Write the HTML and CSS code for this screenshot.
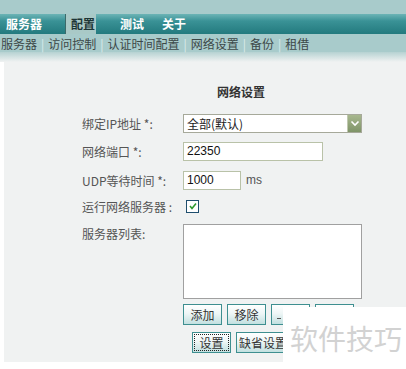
FILE: index.html
```html
<!DOCTYPE html>
<html lang="zh-CN">
<head>
  <meta charset="UTF-8">
  <title>网络设置</title>
  <link rel="stylesheet" href="styles.css">
</head>
<body>
  <div class="top-strip"></div>
  <nav class="main-nav">
    <a class="tab">服务器</a>
    <a class="tab active">配置</a>
    <a class="tab">测试</a>
    <a class="tab">关于</a>
  </nav>
  <div class="sub-nav">
    <a>服务器</a><span class="sep">|</span>
    <a>访问控制</a><span class="sep">|</span>
    <a>认证时间配置</a><span class="sep">|</span>
    <a>网络设置</a><span class="sep">|</span>
    <a>备份</a><span class="sep">|</span>
    <a>租借</a>
  </div>
  <div class="fade"></div>

  <div class="content">
    <div class="form">
      <h2 class="title">网络设置</h2>

      <div class="row row-select">
        <label>绑定IP地址 *:</label>
        <div class="select">
          <span>全部(默认)</span>
          <span class="arrow">
            <svg width="12" height="16" viewBox="0 0 12 16"><path d="M2.5 6.5 L6 10 L9.5 6.5" fill="none" stroke="#fff" stroke-width="1.6"/></svg>
          </span>
        </div>
      </div>

      <div class="row">
        <label>网络端口 *:</label>
        <div class="input port">22350</div>
      </div>

      <div class="row">
        <label>UDP等待时间 *:</label>
        <div class="input wait">1000</div>
        <span class="unit">ms</span>
      </div>

      <div class="row row-check">
        <label>运行网络服务器 :</label>
        <span class="checkbox">
          <svg width="10" height="10" viewBox="0 0 10 10"><path d="M2 5 L4 7.5 L8 2.5" fill="none" stroke="#2e9a2e" stroke-width="1.6"/></svg>
        </span>
      </div>

      <div class="row row-list">
        <label>服务器列表:</label>
        <div class="list-box">
          <div class="textarea"></div>
          <div class="buttons">
            <button class="btn">添加</button>
            <button class="btn">移除</button>
            <button class="btn"><span class="dash"></span></button>
            <button class="btn"></button>
          </div>
        </div>
      </div>

      <div class="actions">
        <button class="btn focused">设置</button>
        <button class="btn wide">缺省设置</button>
      </div>
    </div>
  </div>

  <div class="watermark">软件技巧</div>
</body>
</html>
```

FILE: styles.css
```css
body {
  margin: 0;
  background: #ffffff;
  font-family: "Noto Sans CJK SC", "Liberation Sans", sans-serif;
  font-size: 12px;
  color: #444;
  width: 406px;
  height: 369px;
  overflow: hidden;
  position: relative;
}

.top-strip {
  height: 14px;
  background: #a8cbcb;
}

.main-nav {
  height: 20px;
  display: flex;
  align-items: stretch;
  background: linear-gradient(to bottom, #6cb4b6 0%, #3a9296 35%, #237a7e 100%);
}

.tab {
  font-family: "Noto Sans CJK SC", sans-serif;
  font-weight: bold;
  font-size: 12px;
  line-height: 20px;
  color: #ffffff;
  padding: 0 5px;
}

.tab:nth-child(1) { padding-left: 6px; margin-right: 18px; }
.tab:nth-child(3) { margin-left: 19px; margin-right: 8px; }

.tab.active {
  background: #a9c9c7;
  color: #1d3535;
  border-left: 1px solid #3c6a6a;
  width: 31px;
  padding: 0 0 0 5px;
  box-sizing: border-box;
}

.sub-nav {
  height: 18px;
  background: #a8cbcb;
  display: flex;
  align-items: center;
  padding-left: 1px;
  font-size: 12px;
  color: #3c4848;
}

.sub-nav .sep {
  color: #dcecec;
  margin: 0 4px;
}

.fade {
  height: 10px;
  background: linear-gradient(to bottom, #b6d2d2, #f0f2f2);
}

.content {
  margin-left: 4px;
  background: #f0f2f2;
  height: 300px;
}

.form {
  padding-left: 78px;
}

.title {
  margin: 0;
  padding: 22px 0 13px 135px;
  font-size: 12px;
  font-weight: bold;
  color: #333;
  line-height: 16px;
}

.row {
  display: flex;
  align-items: center;
  height: 20px;
  margin-bottom: 9px;
}

.row label {
  width: 101px;
  color: #555;
  flex-shrink: 0;
}

.row-select { margin-bottom: 8px; }

.select {
  width: 179px;
  height: 19px;
  box-sizing: border-box;
  border: 1px solid #a6a99a;
  background: #fff;
  display: flex;
  align-items: center;
  justify-content: space-between;
  padding-left: 3px;
  color: #222;
  font-size: 12px;
}

.arrow {
  width: 13px;
  height: 17px;
  display: flex;
  align-items: center;
  justify-content: center;
  background: linear-gradient(to bottom, #a8b88f, #7f9468);
  border-left: 1px solid #c0c8b0;
}

.input {
  height: 19px;
  box-sizing: border-box;
  border: 1px solid #b9c2a8;
  background: #fff;
  padding-left: 3px;
  line-height: 17px;
  font-family: "Liberation Sans", Arial, sans-serif;
  color: #111;
}

.port { width: 140px; }
.wait { width: 58px; }

.unit {
  margin-left: 5px;
  color: #555;
  font-family: "Liberation Sans", Arial, sans-serif;
}

.row-check { height: 14px; margin-bottom: 11px; }

.checkbox {
  width: 11px;
  height: 11px;
  border: 1px solid #1f4f6e;
  background: #fff;
  margin-left: 3px;
  display: flex;
  align-items: center;
  justify-content: center;
}

.row-list {
  align-items: flex-start;
  height: auto;
  margin-bottom: 7px;
}

.row-list label { padding-top: 1px; }

.textarea {
  width: 179px;
  height: 75px;
  box-sizing: border-box;
  border: 1px solid #a0a0a0;
  background: #fff;
}

.buttons {
  display: flex;
  gap: 5px;
  margin-top: 5px;
}

.btn {
  width: 39px;
  height: 21px;
  padding: 0;
  border: 1px solid #3e8f90;
  background: linear-gradient(to bottom, #ffffff 0%, #eef6f6 45%, #c2e0e0 100%);
  font-family: "Noto Sans CJK SC", sans-serif;
  font-size: 12px;
  color: #333;
  line-height: 19px;
}

.dash {
  display: block;
  width: 4px;
  height: 1px;
  margin: 7px 0 0 5px;
  background: #555;
}

.actions {
  display: flex;
  gap: 5px;
  padding-left: 110px;
}

.btn.focused {
  outline: 1px dotted #222;
  outline-offset: -3px;
}

.btn.wide { width: 54px; }

.watermark {
  position: absolute;
  left: 283px;
  top: 307px;
  width: 123px;
  height: 62px;
  background: #ffffff;
  color: #d2d2d2;
  font-size: 28px;
  line-height: 62px;
  padding-left: 7px;
  box-sizing: border-box;
  font-family: "Noto Sans CJK SC", sans-serif;
}
```
